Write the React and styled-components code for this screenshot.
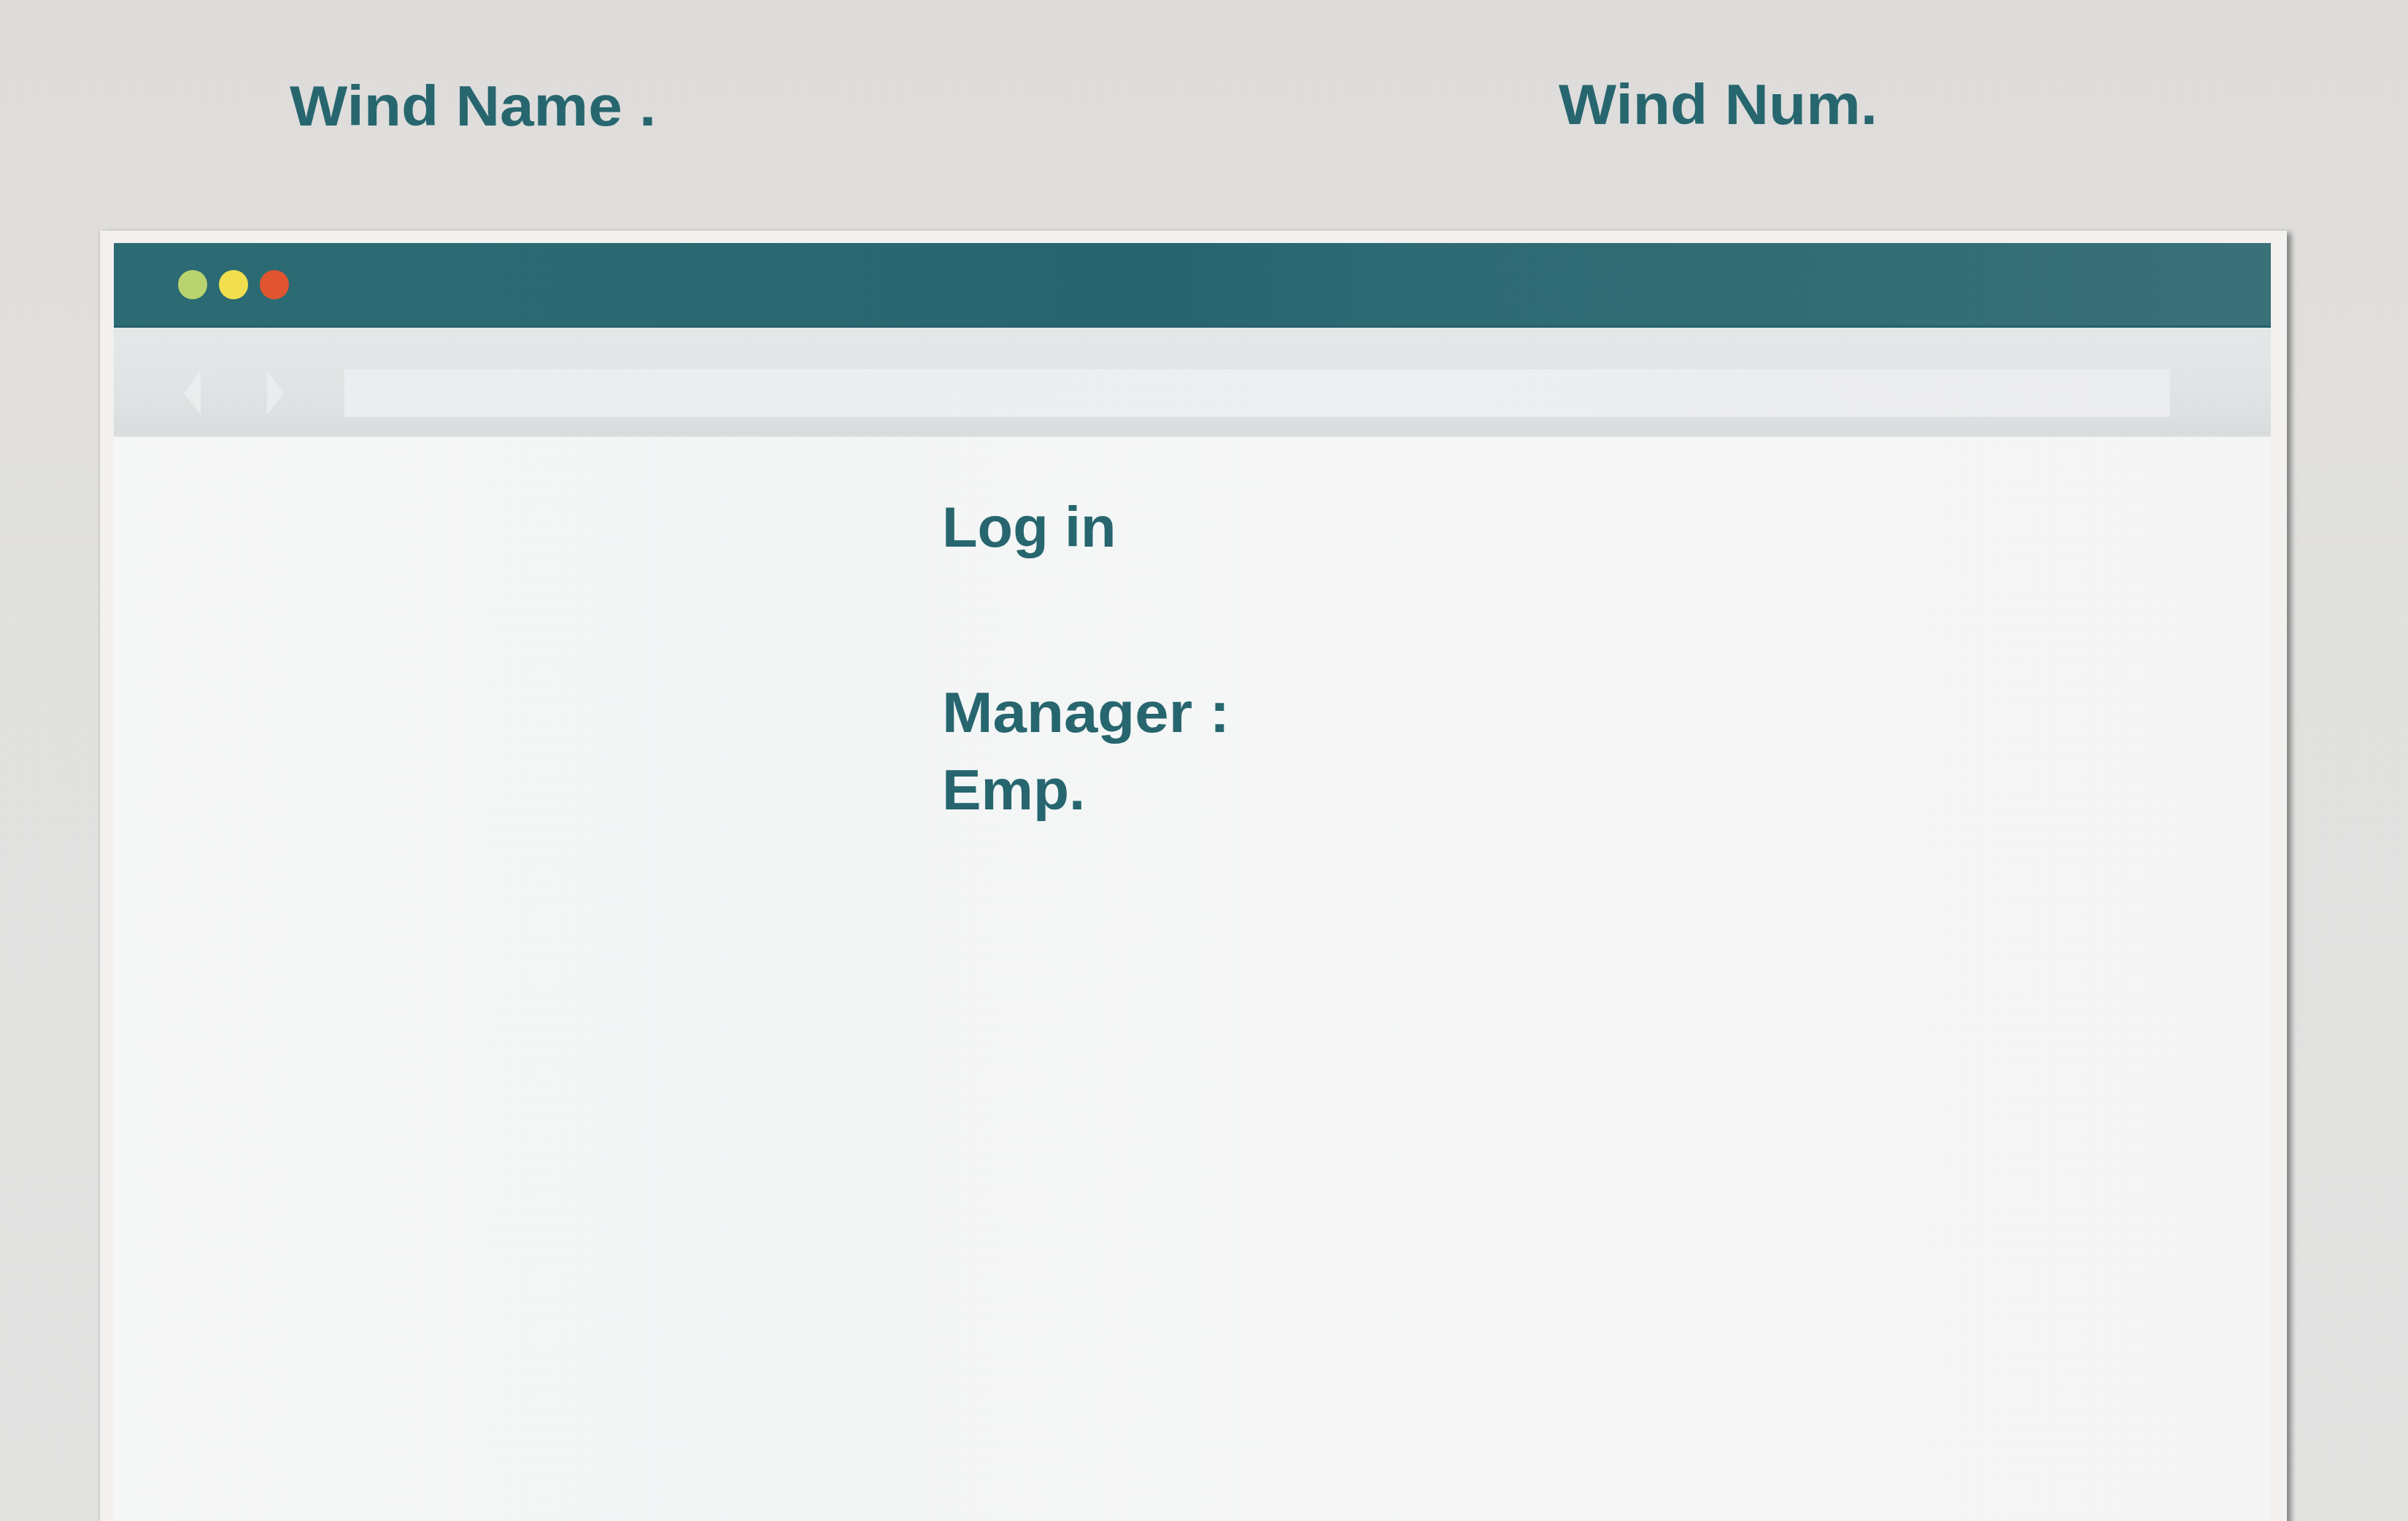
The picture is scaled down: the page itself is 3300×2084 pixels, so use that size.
import React from 'react'
import styled, { createGlobalStyle } from 'styled-components'

const GlobalStyle = createGlobalStyle`
  html, body {
    margin: 0;
    padding: 0;
    overflow: hidden;
  }
  body {
    width: 3300px;
    height: 2084px;
    background: linear-gradient(180deg, #dddcda 0%, #e1e0de 30%, #e2e2e1 100%);
    font-family: "Liberation Sans", Arial, sans-serif;
  }
`

const teal = '#27666f'

const Page = styled.div`
  width: 3300px;
  height: 2084px;
  overflow: hidden;
`

const Header = styled.div`
  display: flex;
  align-items: flex-start;
  padding: 106px 0 0 397px;
`

const Label = styled.div`
  width: ${p => p.width || 'auto'};
  margin-top: ${p => p.lift ? '-2px' : '0'};
  color: ${teal};
  font-weight: 700;
  font-size: 78px;
  line-height: 1;
  white-space: pre;
  transform: scaleX(1.075);
  transform-origin: left center;
`

const Frame = styled.div`
  margin: 132px 0 0 137px;
  width: 2956px;
  height: 1800px;
  padding: 17px 22px 0 19px;
  background: #f2f1ef;
  box-shadow: 7px 2px 7px -1px rgba(60, 60, 60, 0.55), -2px 0 2px rgba(150, 150, 150, 0.25);
  display: flex;
  flex-direction: column;
`

const TitleBar = styled.div`
  height: 113px;
  flex-shrink: 0;
  display: flex;
  align-items: center;
  gap: 16px;
  padding-left: 88px;
  background: linear-gradient(90deg, #2c6b74 0%, #2a6872 30%, #266470 48%, #2d6a74 60%, #336d75 85%, #3b7078 100%);
  border-bottom: 3px solid #24606a;
`

const Dot = styled.span`
  width: 40px;
  height: 40px;
  border-radius: 50%;
  background: ${p => p.color};
`

const Toolbar = styled.div`
  height: 150px;
  flex-shrink: 0;
  box-sizing: border-box;
  display: flex;
  align-items: center;
  padding: 30px 138px 0 96px;
  background: linear-gradient(180deg, #e4e8e8 0%, #e1e5e5 45%, #dde1e1 75%, #d8dcdc 100%);
  border-bottom: 2px solid #e4e6e6;
`

const ArrowSvg = styled.svg`
  width: 23px;
  height: 60px;
  flex-shrink: 0;
  margin-right: ${p => p.gap}px;
`

const AddressBar = styled.div`
  flex: 1;
  height: 65px;
  background: linear-gradient(90deg, #ebeeef 0%, #eceeef 60%, #ebecee 100%);
`

const Content = styled.div`
  flex: 1;
  padding: 84px 0 0 1135px;
  background: linear-gradient(90deg, #f6f7f7 0%, #f3f5f6 25%, #f5f6f6 50%, #f5f5f5 100%);
`

const Heading = styled.div`
  color: ${teal};
  font-weight: 700;
  font-size: 78px;
  line-height: 1;
  margin-bottom: ${p => p.gap || 0}px;
  white-space: pre;
  transform: scaleX(${p => p.stretch || 1.07});
  transform-origin: left center;
`

function Arrow({ dir, gap }) {
  const d = dir === 'left' ? 'M23 0 L0 30 L23 60 Z' : 'M0 0 L23 30 L0 60 Z'
  return (
    <ArrowSvg viewBox="0 0 23 60" gap={gap}>
      <path d={d} fill="#eaeded" />
    </ArrowSvg>
  )
}

export default function App() {
  return (
    <Page>
      <GlobalStyle />
      <Header>
        <Label width="1739px">Wind Name .</Label>
        <Label lift>Wind Num.</Label>
      </Header>
      <Frame>
        <TitleBar>
          <Dot color="#b9d46f" />
          <Dot color="#f2df4e" />
          <Dot color="#e0552f" />
        </TitleBar>
        <Toolbar>
          <Arrow dir="left" gap={91} />
          <Arrow dir="right" gap={83} />
          <AddressBar />
        </Toolbar>
        <Content>
          <Heading gap={176} stretch={1.02}>Log in</Heading>
          <Heading gap={28}>Manager :</Heading>
          <Heading stretch={1.03}>Emp.</Heading>
        </Content>
      </Frame>
    </Page>
  )
}
